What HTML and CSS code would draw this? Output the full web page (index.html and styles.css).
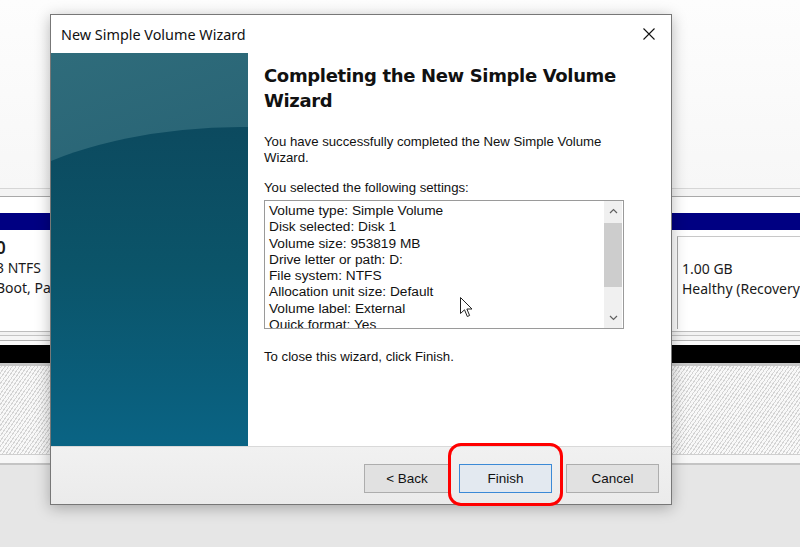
FILE: index.html
```html
<!DOCTYPE html>
<html lang="en">
<head>
    <meta charset="UTF-8">
    <title>New Simple Volume Wizard</title>
    <link rel="stylesheet" href="styles.css">
</head>
<body>
    <!-- disk management view behind the wizard -->
    <div class="desk">
        <div class="volume-list"></div>
        <div class="sep-rule"></div>
        <div class="gap-white"></div>
        <div class="disk-bar"></div>
        <div class="gap-white small"></div>
        <div class="partitions">
            <div class="partition left">
                <span class="part-name">0</span>
                <span>3 NTFS</span>
                <span>Boot, Pa</span>
            </div>
            <div class="partition right">
                <span class="part-name">&nbsp;</span>
                <span>1.00 GB</span>
                <span>Healthy (Recovery</span>
            </div>
        </div>
        <div class="sep-lines"></div>
        <div class="disk-bar black"></div>
        <div class="hatch"></div>
        <div class="sep-rule low"></div>
        <div class="status-area"></div>
    </div>

    <div class="wizard">
        <div class="titlebar">
            <span class="title">New Simple Volume Wizard</span>
            <svg class="close" width="12" height="12" viewBox="0 0 12 12">
                <path d="M0.5 0.5 L11.5 11.5 M11.5 0.5 L0.5 11.5" stroke="#111" stroke-width="1.1" fill="none"/>
            </svg>
        </div>
        <div class="wizard-body">
            <div class="side"></div>
            <div class="content">
                <h1>Completing the New Simple Volume Wizard</h1>
                <p class="intro">You have successfully completed the New Simple Volume Wizard.</p>
                <p class="label">You selected the following settings:</p>
                <div class="listbox">
                    <div class="list-text">
                        <div>Volume type: Simple Volume</div>
                        <div>Disk selected: Disk 1</div>
                        <div>Volume size: 953819 MB</div>
                        <div>Drive letter or path: D:</div>
                        <div>File system: NTFS</div>
                        <div>Allocation unit size: Default</div>
                        <div>Volume label: External</div>
                        <div>Quick format: Yes</div>
                    </div>
                    <div class="scrollbar">
                        <svg class="arrow" width="9" height="6" viewBox="0 0 9 6"><path d="M1 5 L4.5 1.5 L8 5" stroke="#606060" stroke-width="1.2" fill="none"/></svg>
                        <div class="track"><div class="thumb"></div></div>
                        <svg class="arrow" width="9" height="6" viewBox="0 0 9 6"><path d="M1 1 L4.5 4.5 L8 1" stroke="#606060" stroke-width="1.2" fill="none"/></svg>
                    </div>
                </div>
                <p class="hint">To close this wizard, click Finish.</p>
            </div>
        </div>
        <div class="footer">
            <button class="btn back">&lt; Back</button>
            <button class="btn finish">Finish</button>
            <button class="btn cancel">Cancel</button>
        </div>
    </div>

    <!-- mouse pointer -->
    <svg class="pointer" width="13" height="21" viewBox="0 0 13 21">
        <path d="M0.5 0.5 L0.5 16.5 L4.5 12.8 L7.3 19.5 L9.6 18.5 L6.9 12 L12 12 Z" fill="#fff" stroke="#222" stroke-width="1" stroke-linejoin="round"/>
    </svg>

    <!-- highlight ring round the Finish button -->
    <div class="ring"></div>
</body>
</html>
```

FILE: styles.css
```css
body {
    margin: 0;
    width: 800px;
    height: 547px;
    overflow: hidden;
    position: relative;
    background: #e6e6e6;
    font-family: 'Liberation Sans', Arial, sans-serif;
}

/* ---------- background window ---------- */
.desk {
    display: flex;
    flex-direction: column;
}

.volume-list {
    height: 188px;
    background: linear-gradient(to bottom, #fdfdfd, #f7f7f7);
}

.sep-rule {
    height: 12px;
    background: linear-gradient(to bottom, #d6d6d6 0, #d6d6d6 1px, #f4f4f4 1px, #f4f4f4 8px, #a9a9a9 8px, #a9a9a9 9px, #fff 9px);
}

.sep-rule.low {
    height: 11px;
    background: linear-gradient(to bottom, #cfcfcf 0, #cfcfcf 1px, #f7f7f7 1px, #f7f7f7 9px, #c4c4c4 9px, #c4c4c4 11px);
}

.gap-white {
    height: 13px;
    background: #fff;
}

.gap-white.small {
    height: 6px;
}

.disk-bar {
    height: 17px;
    background: #000082;
}

.disk-bar.black {
    height: 18px;
    background: #000;
    border-bottom: 3px solid #c8c8c8;
}

.partitions {
    height: 93px;
    display: flex;
    justify-content: space-between;
    background: #fff;
    font-family: 'Noto Sans', sans-serif;
    font-size: 14px;
    color: #1a1a1a;
}

.partition {
    display: flex;
    flex-direction: column;
    line-height: 20px;
}

.partition.left {
    margin-left: -4px;
    padding-top: 2px;
}

.partition.left .part-name {
    font-size: 17px;
    font-weight: 600;
}

.partition.right {
    width: 118px;
    padding: 2px 0 0 4px;
    border-left: 1px solid #a8a8a8;
    border-top: 1px solid #c8c8c8;
}

.sep-lines {
    height: 16px;
    background: linear-gradient(to bottom, #fff 0, #fff 2px, #bdbdbd 2px, #bdbdbd 3px, #f2f2f2 3px, #f2f2f2 6px, #c4c4c4 6px, #c4c4c4 7px, #f5f5f5 7px, #f5f5f5 11px, #b0b0b0 11px, #b0b0b0 12px, #fafafa 12px);
}

.hatch {
    height: 88px;
    background: repeating-linear-gradient(-55deg, #f8f8f8 0, #f8f8f8 2px, #d4d4d4 2px, #d4d4d4 3px);
}

.status-area {
    flex: 1;
    height: 80px;
    background: linear-gradient(to bottom, #ececec, #e2e2e2);
}

/* ---------- wizard dialog ---------- */
.wizard {
    position: absolute;
    left: 50px;
    top: 14px;
    width: 622px;
    height: 491px;
    box-sizing: border-box;
    border: 1px solid #777;
    background: #fff;
    display: flex;
    flex-direction: column;
    box-shadow: 0 3px 14px rgba(0, 0, 0, 0.28);
}

.titlebar {
    height: 38px;
    display: flex;
    align-items: center;
    justify-content: space-between;
    padding: 0 16px 0 10px;
}

.title {
    font-family: 'Noto Sans', sans-serif;
    font-size: 14.4px;
    color: #111;
}

.wizard-body {
    flex: 1;
    display: flex;
}

.side {
    width: 197px;
    position: relative;
    overflow: hidden;
    background: linear-gradient(160deg, #2f6c7b 0%, #276274 45%, #1d586a 100%);
}

/* darker sweep across the lower part of the banner */
.side::after {
    content: '';
    position: absolute;
    left: -110px;
    top: 74px;
    width: 600px;
    height: 600px;
    border-radius: 50% / 25%;
    background: linear-gradient(to bottom, #0c4a5f 0, #0b5469 140px, #0a5e7b 260px, #0a6586 330px);
}

.content {
    flex: 1;
    padding: 10px 0 0 16px;
    color: #111;
    font-size: 13.2px;
}

.content h1 {
    margin: 0;
    font-family: 'DejaVu Sans', Verdana, sans-serif;
    font-size: 18px;
    font-weight: bold;
    line-height: 25px;
    letter-spacing: -0.35px;
    width: 370px;
}

.content p {
    margin: 0;
    line-height: 16px;
}

.intro {
    margin-top: 21px !important;
    width: 350px;
}

.label {
    margin-top: 14px !important;
}

.listbox {
    margin-top: 4px;
    width: 360px;
    height: 129px;
    box-sizing: border-box;
    border: 1px solid #9a9a9a;
    display: flex;
    overflow: hidden;
}

.list-text {
    flex: 1;
    padding: 2px 0 0 4px;
    line-height: 16.3px;
    font-size: 13.7px;
}

.scrollbar {
    width: 18px;
    margin: 0 1px 0 0;
    background: #f0f0f0;
    display: flex;
    flex-direction: column;
    align-items: center;
}

.arrow {
    margin: 7px 0;
}

.track {
    flex: 1;
    width: 100%;
}

.thumb {
    margin-top: 2px;
    height: 64px;
    background: #cdcdcd;
}

.hint {
    margin-top: 20px !important;
}

.footer {
    height: 58px;
    box-sizing: border-box;
    padding: 6px 12px 0 0;
    border-top: 1px solid #d9d9d9;
    background: linear-gradient(to bottom, #f1f1f1, #ebebeb);
    display: flex;
    align-items: center;
    justify-content: flex-end;
}

.btn {
    height: 29px;
    margin-left: 9px;
    box-sizing: border-box;
    border: 1px solid #adadad;
    background: #e1e1e1;
    font-family: 'Liberation Sans', Arial, sans-serif;
    font-size: 13.5px;
    color: #111;
    padding: 0;
}

.btn.back {
    width: 86px;
}

.btn.finish {
    width: 93px;
    border: 1px solid #3c8ad6;
    background: #e3e9f0;
}

.btn.cancel {
    width: 93px;
    margin-left: 14px;
}

/* ---------- overlays ---------- */
.pointer {
    position: absolute;
    left: 460px;
    top: 297px;
}

.ring {
    position: absolute;
    left: 448px;
    top: 443px;
    width: 115px;
    height: 63px;
    box-sizing: border-box;
    border: 3px solid #f00;
    border-radius: 13px;
}
```
